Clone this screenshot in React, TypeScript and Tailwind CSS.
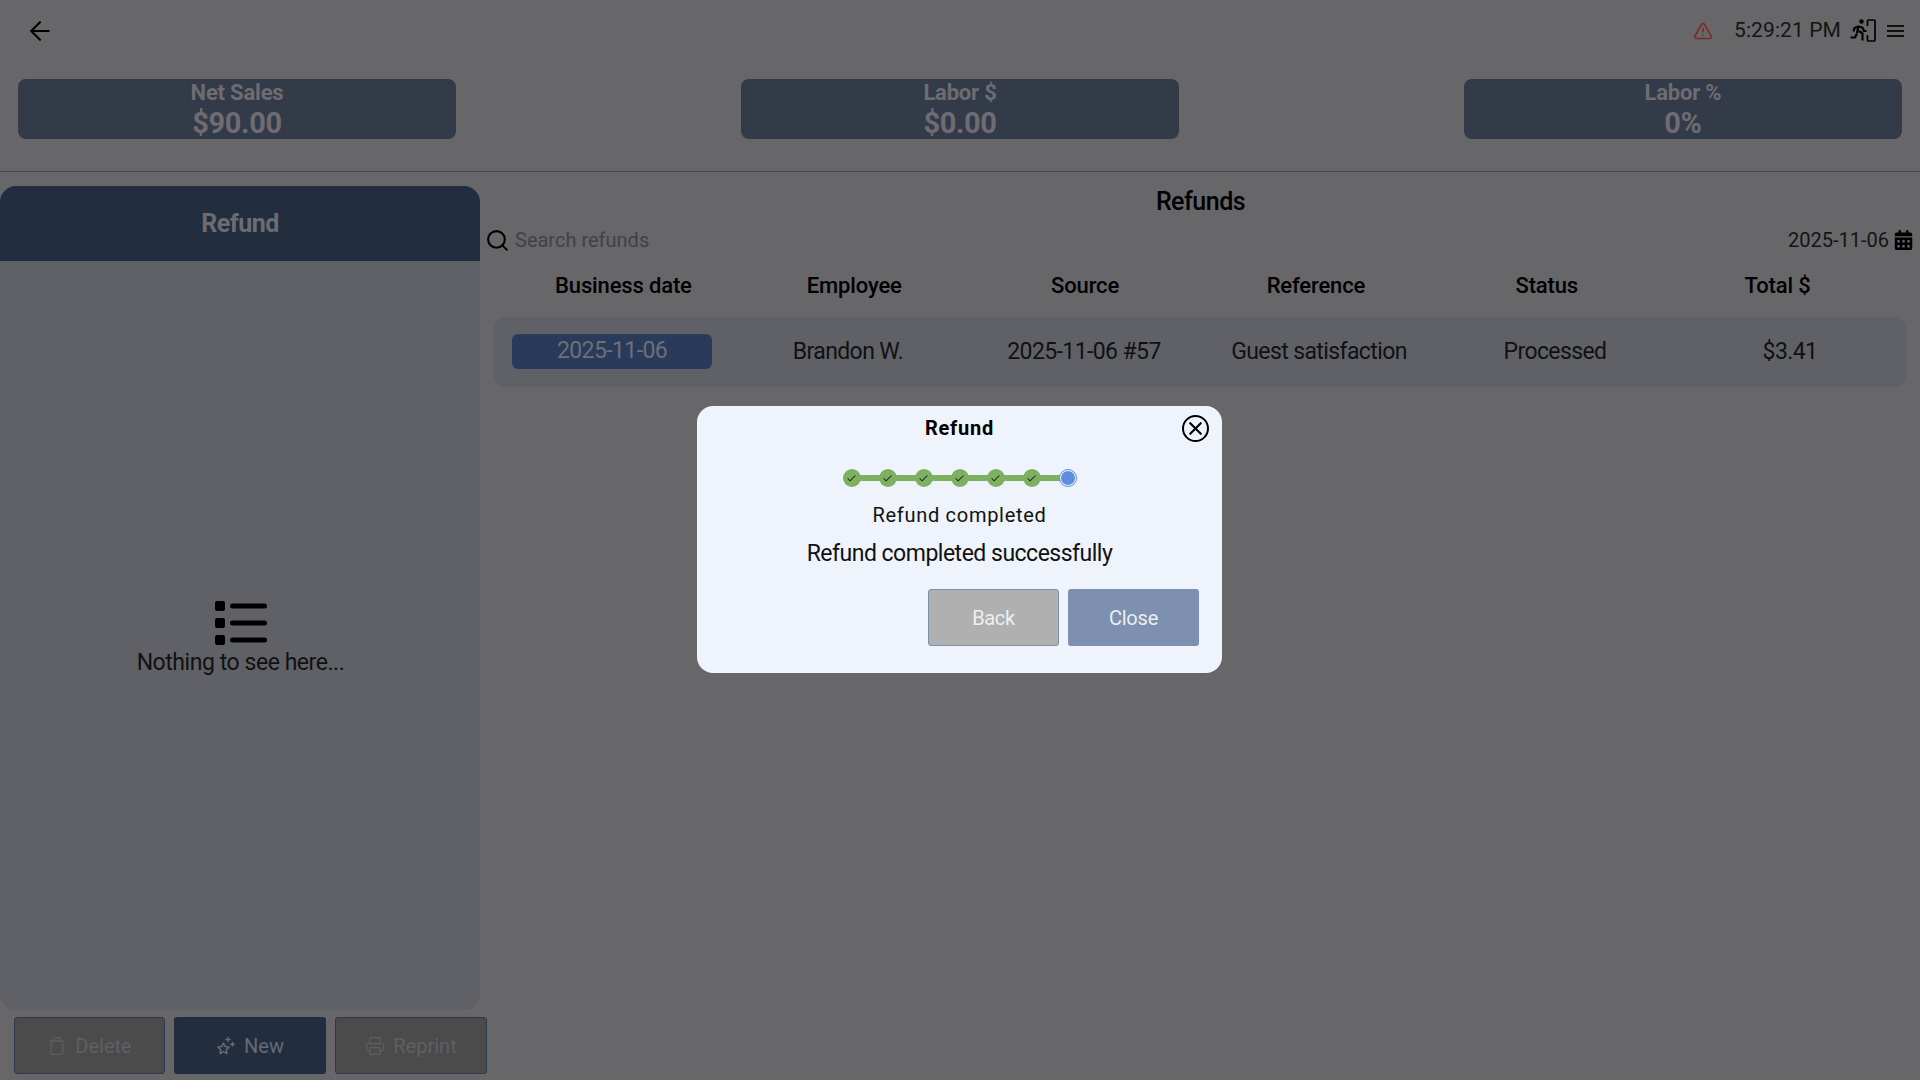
import { ArrowLeft, Check, Printer, Search, Trash, TriangleAlert, X } from 'lucide-react'
import { FaCalendarDays } from 'react-icons/fa6'

const kpis = [
  { label: 'Net Sales', value: '$90.00' },
  { label: 'Labor $', value: '$0.00' },
  { label: 'Labor %', value: '0%' },
]

const columns = ['Business date', 'Employee', 'Source', 'Reference', 'Status', 'Total $']
const row = ['Brandon W.', '2025-11-06 #57', 'Guest satisfaction', 'Processed', '$3.41']

function ExitRunIcon() {
  return (
    <svg width="26" height="23" viewBox="0 0 26 23" fill="none" className="ml-[9px]">
      <circle cx="11.5" cy="2.5" r="2.2" fill="black" />
      <path d="M0.5 18.5h4.5l2-4 M7 14l1.5-6.5 4 1 M8.5 7.5L4.5 9l-1 3.5 M9 12l3.5 2.5v7 M12.5 8.5l1.5 3.5h2.5" stroke="black" strokeWidth="2.2" strokeLinejoin="round" />
      <path d="M18.5 1h5.5a1 1 0 0 1 1 1v19a1 1 0 0 1-1 1h-5.5a1 1 0 0 1-1-1v-5 M17.5 7v-5a1 1 0 0 1 1-1" stroke="black" strokeWidth="1.7" />
    </svg>
  )
}

function MenuLines() {
  return (
    <div className="ml-[11px] w-[17px] flex flex-col gap-[3px]">
      <div className="h-[2px] bg-[#111]" />
      <div className="h-[2px] bg-[#111]" />
      <div className="h-[2px] bg-[#111]" />
    </div>
  )
}

function ListIcon() {
  return (
    <svg width="52" height="44" viewBox="0 0 52 44" fill="black">
      <rect x="0" y="0" width="10" height="10" rx="2" />
      <rect x="0" y="17" width="10" height="10" rx="2" />
      <rect x="0" y="34" width="10" height="10" rx="2" />
      <rect x="15" y="2.5" width="37" height="5" rx="2.5" />
      <rect x="15" y="19.5" width="37" height="5" rx="2.5" />
      <rect x="15" y="36.5" width="37" height="5" rx="2.5" />
    </svg>
  )
}

function NewIcon() {
  return (
    <svg width="20" height="20" viewBox="0 0 20 20" fill="none" stroke="#666a72" strokeWidth="1.5" strokeLinejoin="round">
      <path d="M7.5 7l1.7 3.6 3.8.5-2.8 2.6.7 3.8-3.4-1.9-3.4 1.9.7-3.8L2 11.1l3.8-.5z" />
      <path d="M12 1.5v4 M10 3.5h4 M16.5 6.5v3.4 M14.8 8.2h3.4" strokeLinecap="round" />
    </svg>
  )
}

function Kpi({ label, value }: { label: string; value: string }) {
  return (
    <div className="w-[438px] h-[60px] rounded-lg bg-[#333a48] flex flex-col items-center pt-[1px] text-[#6d6d71] font-bold">
      <div className="text-[22px] leading-[26px] tracking-[-0.2px]">{label}</div>
      <div className="text-[29px] leading-[35px] tracking-[-0.35px]">{value}</div>
    </div>
  )
}

function ActionButton({ icon, label, primary, width }: { icon: React.ReactNode; label: string; primary?: boolean; width: string }) {
  return (
    <button className={`${width} h-[57px] rounded-[3px] text-[20px] flex items-center justify-center gap-2 ${primary ? 'bg-[#222e3f] text-[#666a72]' : 'bg-[#4b4b4c] border border-[#2b3a50] text-[#5f5f63]'}`}>
      {icon}
      {label}
    </button>
  )
}

function Stepper() {
  return (
    <div className="relative flex items-center gap-[18px] h-[18px]">
      <div className="absolute left-2 right-2 h-[6px] bg-[#7db061]" />
      {[0, 1, 2, 3, 4, 5].map((i) => (
        <div key={i} className="relative w-[18px] h-[18px] rounded-full bg-[#7db061] flex items-center justify-center">
          <Check className="w-[11px] h-[11px] text-[#222]" strokeWidth={2.25} />
        </div>
      ))}
      <div className="relative w-[18px] h-[18px] rounded-full bg-[#eff3fb] border border-[#5f8ee0] flex items-center justify-center">
        <div className="w-[14px] h-[14px] rounded-full bg-[#5f8ee0]" />
      </div>
    </div>
  )
}

export default function App() {
  return (
    <div className="relative w-[1920px] h-[1080px] overflow-hidden bg-[#676669] text-black font-['Roboto',sans-serif]">
      {/* Top bar */}
      <div className="h-[61px] flex items-center pl-[25px] pr-[16px]">
        <ArrowLeft className="w-[30px] h-[30px]" strokeWidth={1.75} />
        <div className="ml-auto flex items-center">
          <TriangleAlert className="w-[20px] h-[20px] text-[#7a2c2e]" strokeWidth={2} />
          <span className="ml-[21px] text-[21px] tracking-[0.1px] text-[#151515]">5:29:21 PM</span>
          <ExitRunIcon />
          <MenuLines />
        </div>
      </div>

      {/* KPI cards */}
      <div className="mt-[18px] px-[18px] flex justify-between">
        {kpis.map((k) => (
          <Kpi key={k.label} label={k.label} value={k.value} />
        ))}
      </div>
      <div className="mt-[32px] h-px bg-[#43474f]" />

      <div className="flex mt-[14px]">
        {/* Left panel */}
        <div className="w-[480px] shrink-0 flex flex-col">
          <div className="h-[824px] rounded-2xl bg-[#5f6166] flex flex-col overflow-hidden">
            <div className="h-[75px] bg-[#222e3f] flex items-center justify-center text-[25px] font-bold tracking-[-0.5px] text-[#6a6c71]">Refund</div>
            <div className="flex-1 flex flex-col items-center justify-center pt-[7px] pl-px">
              <ListIcon />
              <div className="mt-[4px] text-[23px] leading-[28px] tracking-[-0.45px] text-[#111]">Nothing to see here...</div>
            </div>
          </div>
          <div className="mt-[7px] pl-[14px] flex gap-[9px] w-[500px]">
            <ActionButton width="w-[151px]" icon={<Trash className="w-5 h-5" strokeWidth={1.5} />} label="Delete" />
            <ActionButton width="w-[152px]" primary icon={<NewIcon />} label="New" />
            <ActionButton width="w-[152px]" icon={<Printer className="w-5 h-5" strokeWidth={1.5} />} label="Reprint" />
          </div>
        </div>

        {/* Refunds list */}
        <div className="flex-1">
          <div className="pt-[2px] text-center text-[25px] leading-[28px] font-medium tracking-[-0.5px] pl-px">Refunds</div>
          <div className="mt-[6px] pl-[5px] pr-[7px] flex items-center h-[36px]">
            <Search className="w-[25px] h-[25px]" strokeWidth={2} />
            <span className="ml-[5px] text-[20px] text-[#424245]">Search refunds</span>
            <span className="ml-auto text-[20px] text-[#151515]">2025-11-06</span>
            <FaCalendarDays className="ml-[5px] w-[19px] h-[20px]" />
          </div>
          <div className="mt-[14px] ml-[28px] mr-[27px] grid grid-cols-6 text-center text-[22px] leading-[28px] font-medium tracking-[-0.15px]">
            {columns.map((c) => (
              <div key={c}>{c}</div>
            ))}
          </div>
          <div className="mt-[17px] mx-[14px] h-[70px] rounded-xl bg-[#5f6166] grid grid-cols-[236px_236px_236px_234px_238px_1fr] items-center text-center text-[23px] tracking-[-0.6px] text-[#111]">
            <div className="flex justify-center">
              <div className="w-[200px] h-[35px] -mt-px rounded-md bg-[#293a5a] text-[#6c7078] flex items-center justify-center">2025-11-06</div>
            </div>
            {row.map((c) => (
              <div key={c}>{c}</div>
            ))}
          </div>
        </div>
      </div>

      {/* Refund dialog */}
      <div className="fixed inset-0 flex items-center justify-center">
        <div className="relative mr-px mb-px w-[525px] h-[267px] rounded-2xl bg-[#eff3fb] flex flex-col items-center">
          <div className="mt-[9px] text-[20px] leading-[26px] font-bold tracking-[0.8px]">Refund</div>
          <button className="absolute top-[9px] right-[13px] w-[27px] h-[27px] rounded-full border-2 border-black flex items-center justify-center">
            <X className="w-[21px] h-[21px]" strokeWidth={2.5} />
          </button>
          <div className="mt-[28px]">
            <Stepper />
          </div>
          <div className="mt-[15px] text-[20px] leading-[26px] tracking-[0.7px] text-[#111]">Refund completed</div>
          <div className="mt-[11px] text-[23px] leading-[30px] tracking-[-0.5px] text-[#111]">Refund completed successfully</div>
          <div className="mt-[20px] self-end pr-[23px] flex gap-[9px]">
            <button className="w-[131px] h-[57px] rounded-[3px] bg-[#b0b0b0] border border-[#7d90af] text-[20px] tracking-[-0.3px] text-[#eceef2]">Back</button>
            <button className="w-[131px] h-[57px] rounded-[3px] bg-[#7d90af] text-[20px] tracking-[-0.2px] text-[#eceef2]">Close</button>
          </div>
        </div>
      </div>
    </div>
  )
}
